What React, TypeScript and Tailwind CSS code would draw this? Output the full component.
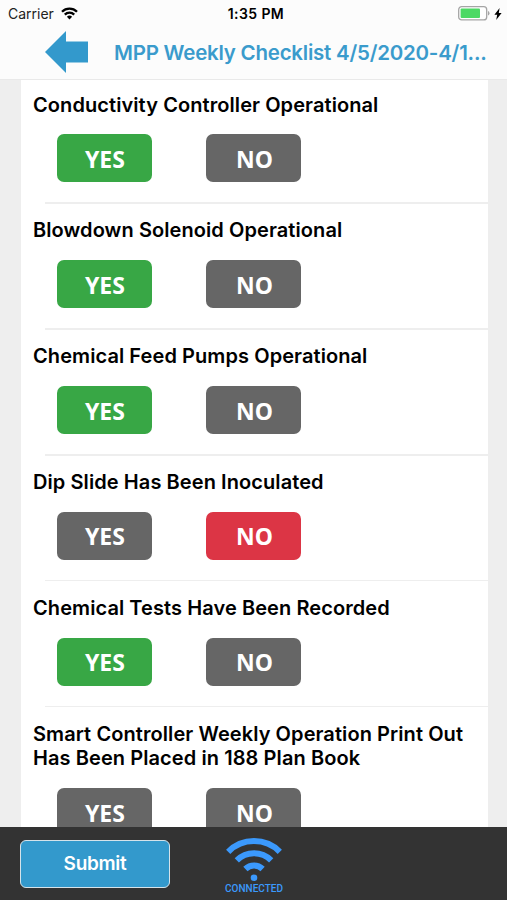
import clsx from "clsx";

type Answer = "yes" | "no" | null;

const QUESTIONS: { text: string; answer: Answer }[] = [
  { text: "Conductivity Controller Operational", answer: "yes" },
  { text: "Blowdown Solenoid Operational", answer: "yes" },
  { text: "Chemical Feed Pumps Operational", answer: "yes" },
  { text: "Dip Slide Has Been Inoculated", answer: "no" },
  { text: "Chemical Tests Have Been Recorded", answer: "yes" },
  { text: "Smart Controller Weekly Operation Print Out Has Been Placed in 188 Plan Book", answer: null },
];

function StatusBar() {
  return (
    <div className="grid h-[27px] grid-cols-3 items-center pl-[8px] pr-[5px] text-[14px] text-[#222]">
      <div className="flex items-center gap-[7px]">
        <span>Carrier</span>
        <svg width="17" height="13" viewBox="0 0 17 13" fill="none" stroke="#000" strokeWidth="2.3">
          <path d="M1 4.8a10.6 10.6 0 0 1 15 0" />
          <path d="M3.8 7.6a6.6 6.6 0 0 1 9.4 0" />
          <path d="M8.5 12.4L5.9 9.8a3.7 3.7 0 0 1 5.2 0Z" fill="#000" stroke="none" />
        </svg>
      </div>
      <span className="pl-[2px] text-center font-semibold tracking-[0.4px] text-black">1:35 PM</span>
      <div className="flex items-center justify-end gap-[4px]">
        <svg width="32" height="15" viewBox="0 0 32 15">
          <rect x="0.7" y="0.7" width="28" height="13.2" rx="3" fill="#fff" stroke="#a5a5a5" strokeWidth="1.3" />
          <rect x="2.6" y="2.6" width="19.4" height="9.4" rx="1" fill="#4cd964" />
          <path d="M30 5v4.6q1.5-.6 1.5-2.3T30 5Z" fill="#a5a5a5" />
        </svg>
        <svg width="8" height="12" viewBox="0 0 8 12">
          <path d="M5.6 0L0.4 6.8h2.8L2.2 12L7.6 4.9H4.8Z" fill="#000" />
        </svg>
      </div>
    </div>
  );
}

function AnswerButton({ label, color }: { label: string; color: string }) {
  return (
    <button
      className={clsx(
        "h-[48px] w-[95px] rounded-[7px] pl-[1px] pt-[2px] font-['Noto_Sans',sans-serif] text-[23px] font-bold leading-none text-white",
        color,
      )}
    >
      {label}
    </button>
  );
}

function Question({ text, answer }: { text: string; answer: Answer }) {
  return (
    <div className="min-h-[125.85px] shrink-0 pt-[14.5px]">
      <h2 className="pl-[12.5px] text-[20px] font-semibold leading-[24.5px] tracking-[0.08px] text-black">{text}</h2>
      <div className="flex gap-[54.5px] pb-[20px] pl-[36.4px] pt-[17.3px]">
        <AnswerButton label="YES" color={answer === "yes" ? "bg-[#38a745]" : "bg-[#666]"} />
        <AnswerButton label="NO" color={answer === "no" ? "bg-[#dc3545]" : "bg-[#666]"} />
      </div>
      <div className="ml-[24px] h-[1.5px] bg-[#eee]" />
    </div>
  );
}

export default function App() {
  return (
    <div className="flex h-[900px] w-[507px] flex-col overflow-hidden bg-[#eee] font-['Inter',sans-serif]">
      <header className="h-[79.5px] shrink-0 border-b border-[#e9e9e9] bg-[#fcfcfc]">
        <StatusBar />
        <div className="flex h-[50px] items-center pl-[45px]">
          <svg width="43" height="42" viewBox="0 0 43 42" className="shrink-0">
            <path d="M0 21L21 0V10.5H43V31.5H21V42Z" fill="#3399cc" />
          </svg>
          <h1 className="ml-[26px] whitespace-nowrap pt-[2px] text-[20.5px] font-semibold tracking-[-0.23px] text-[#3a9bcc]">
            MPP Weekly Checklist 4/5/2020-4/1...
          </h1>
        </div>
      </header>

      <main className="ml-[20.5px] mr-[19px] flex min-h-0 flex-1 flex-col overflow-hidden bg-white">
        <div className="-mt-[1.4px] flex flex-col">
          {QUESTIONS.map((q) => (
            <Question key={q.text} {...q} />
          ))}
        </div>
      </main>

      <footer className="flex h-[73.5px] shrink-0 items-start bg-[#333] pl-[20px] pt-[13px]">
        <button className="h-[48px] w-[150px] rounded-[6px] border border-[#d5e3ea] bg-[#3399cc] pt-[1px] text-[19px] font-semibold tracking-[-0.3px] text-white">
          Submit
        </button>
        <div className="-mt-[2px] ml-[54px] flex w-[60px] flex-col items-center text-[#3b99fc]">
          <svg width="58" height="44" viewBox="0 0 58 44" fill="none" stroke="currentColor" strokeWidth="6">
            <path d="M3.2 13.8a36.5 36.5 0 0 1 51.6 0" />
            <path d="M11.8 22.4a24.3 24.3 0 0 1 34.4 0" />
            <path d="M20.4 31a12.2 12.2 0 0 1 17.2 0" />
            <circle cx="29" cy="39.8" r="3.3" fill="currentColor" stroke="none" />
          </svg>
          <span className="mt-[1.5px] font-['Roboto',sans-serif] text-[10px] font-medium leading-[12px]">
            CONNECTED
          </span>
        </div>
      </footer>
    </div>
  );
}
